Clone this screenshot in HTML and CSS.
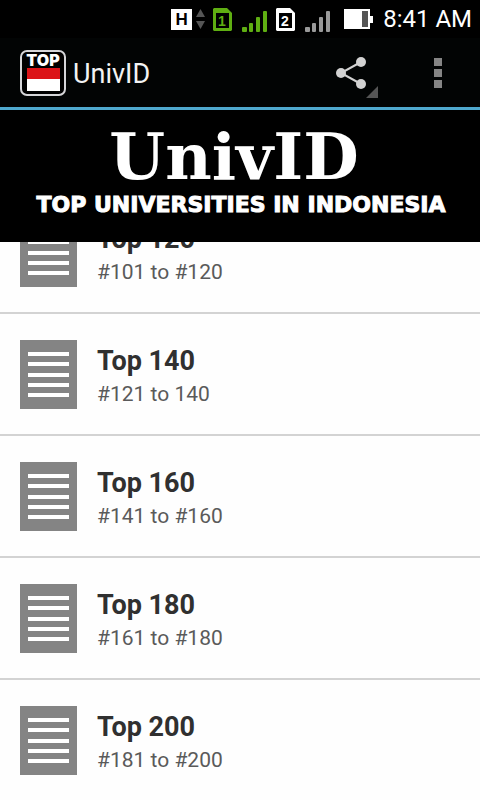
FILE: index.html
```html
<!DOCTYPE html>
<html lang="en">
<head>
    <meta charset="UTF-8">
    <meta name="viewport" content="width=device-width, initial-scale=1.0">
    <title>UnivID</title>
    <link rel="stylesheet" href="styles.css">
</head>
<body>
    <div class="status-bar">
        <div class="status-group network">
            <span class="network-type">H</span>
            <svg width="9" height="20" viewBox="0 0 9 20" fill="#555"><path d="M0 8L4.5 0L9 8ZM0 12H9L4.5 20Z"/></svg>
        </div>
        <div class="status-group sim sim-active">
            <svg width="19" height="23" viewBox="0 0 19 23">
                <path d="M1 0H14L19 5V22L18 23H1L0 22V1Z" fill="currentColor"/>
                <rect x="3" y="5" width="13" height="15" fill="#000"/>
                <text class="sim-number" x="9" y="18" text-anchor="middle">1</text>
            </svg>
            <svg class="signal" width="26" height="22" viewBox="0 0 26 22" fill="currentColor">
                <rect x="0" y="17" width="5" height="5" rx="1"/><rect x="7" y="13" width="4" height="9" rx="1"/><rect x="14" y="7" width="4" height="15" rx="1"/><rect x="21" y="1" width="4" height="21" rx="1"/>
            </svg>
        </div>
        <div class="status-group sim">
            <svg width="19" height="23" viewBox="0 0 19 23">
                <path d="M1 0H14L19 5V22L18 23H1L0 22V1Z" fill="currentColor"/>
                <rect x="3" y="5" width="13" height="15" fill="#000"/>
                <text class="sim-number" x="9" y="18" text-anchor="middle">2</text>
            </svg>
            <svg class="signal" width="26" height="22" viewBox="0 0 26 22" fill="#999">
                <rect x="0" y="17" width="5" height="5" rx="1"/><rect x="7" y="13" width="4" height="9" rx="1"/><rect x="14" y="7" width="4" height="15" rx="1"/><rect x="21" y="1" width="4" height="21" rx="1"/>
            </svg>
        </div>
        <div class="status-group power">
            <svg width="29" height="20" viewBox="0 0 29 20">
                <path d="M0 0H26V7H29V14H26V20H0Z" fill="#fff"/>
                <rect x="18" y="2" width="6" height="16" fill="#555"/>
            </svg>
            <span class="clock">8:41 AM</span>
        </div>
    </div>

    <header class="action-bar">
        <svg class="app-icon" width="46" height="46" viewBox="0 0 46 46">
            <rect x="1" y="1" width="44" height="44" rx="6" fill="#000" stroke="#d5d5d8" stroke-width="2"/>
            <text class="app-icon-text" x="23" y="16" text-anchor="middle">TOP</text>
            <rect x="7" y="18" width="33" height="11" fill="#dc1418"/>
            <rect x="7" y="29" width="33" height="12" fill="#fff"/>
        </svg>
        <h1 class="app-title">UnivID</h1>
        <button type="button" class="action-btn share-btn" aria-label="Share">
            <svg width="42" height="42" viewBox="0 0 42 42" fill="#d2d2d2">
                <path d="M25 6L5 17L25 28" fill="none" stroke="#d2d2d2" stroke-width="2"/>
                <circle cx="25" cy="6" r="5"/><circle cx="5" cy="17" r="5"/><circle cx="25" cy="28" r="5"/>
                <path d="M42 30V42H30Z" fill="#555"/>
            </svg>
        </button>
        <button type="button" class="action-btn menu-btn" aria-label="More options">
            <svg width="8" height="30" viewBox="0 0 8 30" fill="#858585">
                <rect width="8" height="8"/><rect y="11" width="8" height="8"/><rect y="22" width="8" height="8"/>
            </svg>
        </button>
    </header>

    <div class="banner">
        <div class="banner-title">UnivID</div>
        <div class="banner-subtitle">TOP UNIVERSITIES IN INDONESIA</div>
    </div>

    <main class="list-view">
        <ul class="list">
            <li>
                <a href="#top120" class="list-item">
                    <svg class="list-icon" width="57" height="69" viewBox="0 0 57 69"><rect width="57" height="69" fill="#848484"/><path d="M8 14H49M8 24H49M8 35H49M8 45H49M8 55H49" stroke="#fff" stroke-width="4"/></svg>
                    <span class="list-text">
                        <span class="list-title">Top 120</span>
                        <span class="list-range">#101 to #120</span>
                    </span>
                </a>
            </li>
            <li>
                <a href="#top140" class="list-item">
                    <svg class="list-icon" width="57" height="69" viewBox="0 0 57 69"><rect width="57" height="69" fill="#848484"/><path d="M8 14H49M8 24H49M8 35H49M8 45H49M8 55H49" stroke="#fff" stroke-width="4"/></svg>
                    <span class="list-text">
                        <span class="list-title">Top 140</span>
                        <span class="list-range">#121 to 140</span>
                    </span>
                </a>
            </li>
            <li>
                <a href="#top160" class="list-item">
                    <svg class="list-icon" width="57" height="69" viewBox="0 0 57 69"><rect width="57" height="69" fill="#848484"/><path d="M8 14H49M8 24H49M8 35H49M8 45H49M8 55H49" stroke="#fff" stroke-width="4"/></svg>
                    <span class="list-text">
                        <span class="list-title">Top 160</span>
                        <span class="list-range">#141 to #160</span>
                    </span>
                </a>
            </li>
            <li>
                <a href="#top180" class="list-item">
                    <svg class="list-icon" width="57" height="69" viewBox="0 0 57 69"><rect width="57" height="69" fill="#848484"/><path d="M8 14H49M8 24H49M8 35H49M8 45H49M8 55H49" stroke="#fff" stroke-width="4"/></svg>
                    <span class="list-text">
                        <span class="list-title">Top 180</span>
                        <span class="list-range">#161 to #180</span>
                    </span>
                </a>
            </li>
            <li>
                <a href="#top200" class="list-item">
                    <svg class="list-icon" width="57" height="69" viewBox="0 0 57 69"><rect width="57" height="69" fill="#848484"/><path d="M8 14H49M8 24H49M8 35H49M8 45H49M8 55H49" stroke="#fff" stroke-width="4"/></svg>
                    <span class="list-text">
                        <span class="list-title">Top 200</span>
                        <span class="list-range">#181 to #200</span>
                    </span>
                </a>
            </li>
        </ul>
    </main>
</body>
</html>
```
FILE: styles.css
```css
:root {
    --accent-color: #4fa9cf;
    --sim-color: #5fae12;
    --title-color: #303030;
    --range-color: #5a5a5a;
    --divider-color: #d3d3d3;
}

* {
    margin: 0;
    padding: 0;
    box-sizing: border-box;
}

body {
    display: flex;
    flex-direction: column;
    height: 100vh;
    overflow: hidden;
    background-color: #fefefe;
    font-family: Roboto, 'Liberation Sans', sans-serif;
}

svg {
    display: block;
    flex: none;
}

/* Status bar */
.status-bar {
    display: flex;
    justify-content: flex-end;
    align-items: center;
    gap: 8px;
    height: 38px;
    padding-right: 8px;
    background-color: #000;
    color: #fff;
}

.status-group {
    display: flex;
    align-items: center;
    gap: 10px;
}

.network {
    gap: 4px;
}

.network-type {
    width: 21px;
    height: 21px;
    background-color: #fff;
    color: #000;
    font-family: 'Liberation Sans', sans-serif;
    font-size: 17px;
    font-weight: bold;
    line-height: 21px;
    text-align: center;
}

.sim-active {
    color: var(--sim-color);
}

.sim-number {
    fill: currentColor;
    font-family: 'Liberation Sans', sans-serif;
    font-size: 14px;
    font-weight: bold;
}

.signal {
    margin-top: 4px;
}

.power {
    margin-left: 5px;
}

.clock {
    font-size: 24px;
    line-height: 38px;
}

/* Action bar */
.action-bar {
    display: flex;
    align-items: center;
    height: 72px;
    padding: 0 18px 0 20px;
    border-bottom: 3px solid var(--accent-color);
    background-color: #020404;
    color: #f3f3f3;
}

.app-icon-text {
    fill: #fff;
    font-family: Inter, 'Liberation Sans', sans-serif;
    font-size: 16px;
    font-weight: 900;
}

.app-title {
    flex: 1;
    margin-left: 7px;
    padding-top: 3px;
    font-size: 27px;
    font-weight: normal;
    line-height: 32px;
}

.action-btn {
    display: flex;
    justify-content: center;
    border: none;
    background: none;
    cursor: pointer;
}

.share-btn {
    padding-top: 8px;
    margin-right: 36px;
}

.menu-btn {
    width: 48px;
}

/* Banner */
.banner {
    flex: none;
    height: 132px;
    padding: 10px 0 0 2px;
    background-color: #000;
    color: #fff;
    text-align: center;
}

.banner-title {
    padding-right: 14px;
    font-family: 'DejaVu Serif', serif;
    font-size: 64px;
    font-weight: bold;
    line-height: 73px;
}

.banner-subtitle {
    font-family: 'DejaVu Sans', sans-serif;
    font-size: 22px;
    font-weight: bold;
    line-height: 24px;
    white-space: nowrap;
    -webkit-text-stroke: 1px #fff;
}

/* List, scrolled part of a row under the banner */
.list-view {
    flex: 1;
    min-height: 0;
    overflow: hidden;
}

.list {
    margin-top: -50px;
    list-style: none;
}

.list-item {
    display: flex;
    align-items: center;
    gap: 20px;
    height: 122px;
    padding: 1px 20px 0;
    border-bottom: 2px solid var(--divider-color);
    color: var(--range-color);
    text-decoration: none;
}

.list-text {
    display: flex;
    flex-direction: column;
    padding-top: 2px;
}

.list-title {
    color: var(--title-color);
    font-size: 27px;
    font-weight: bold;
    line-height: 36px;
}

.list-range {
    font-size: 21px;
    line-height: 30px;
}
```
